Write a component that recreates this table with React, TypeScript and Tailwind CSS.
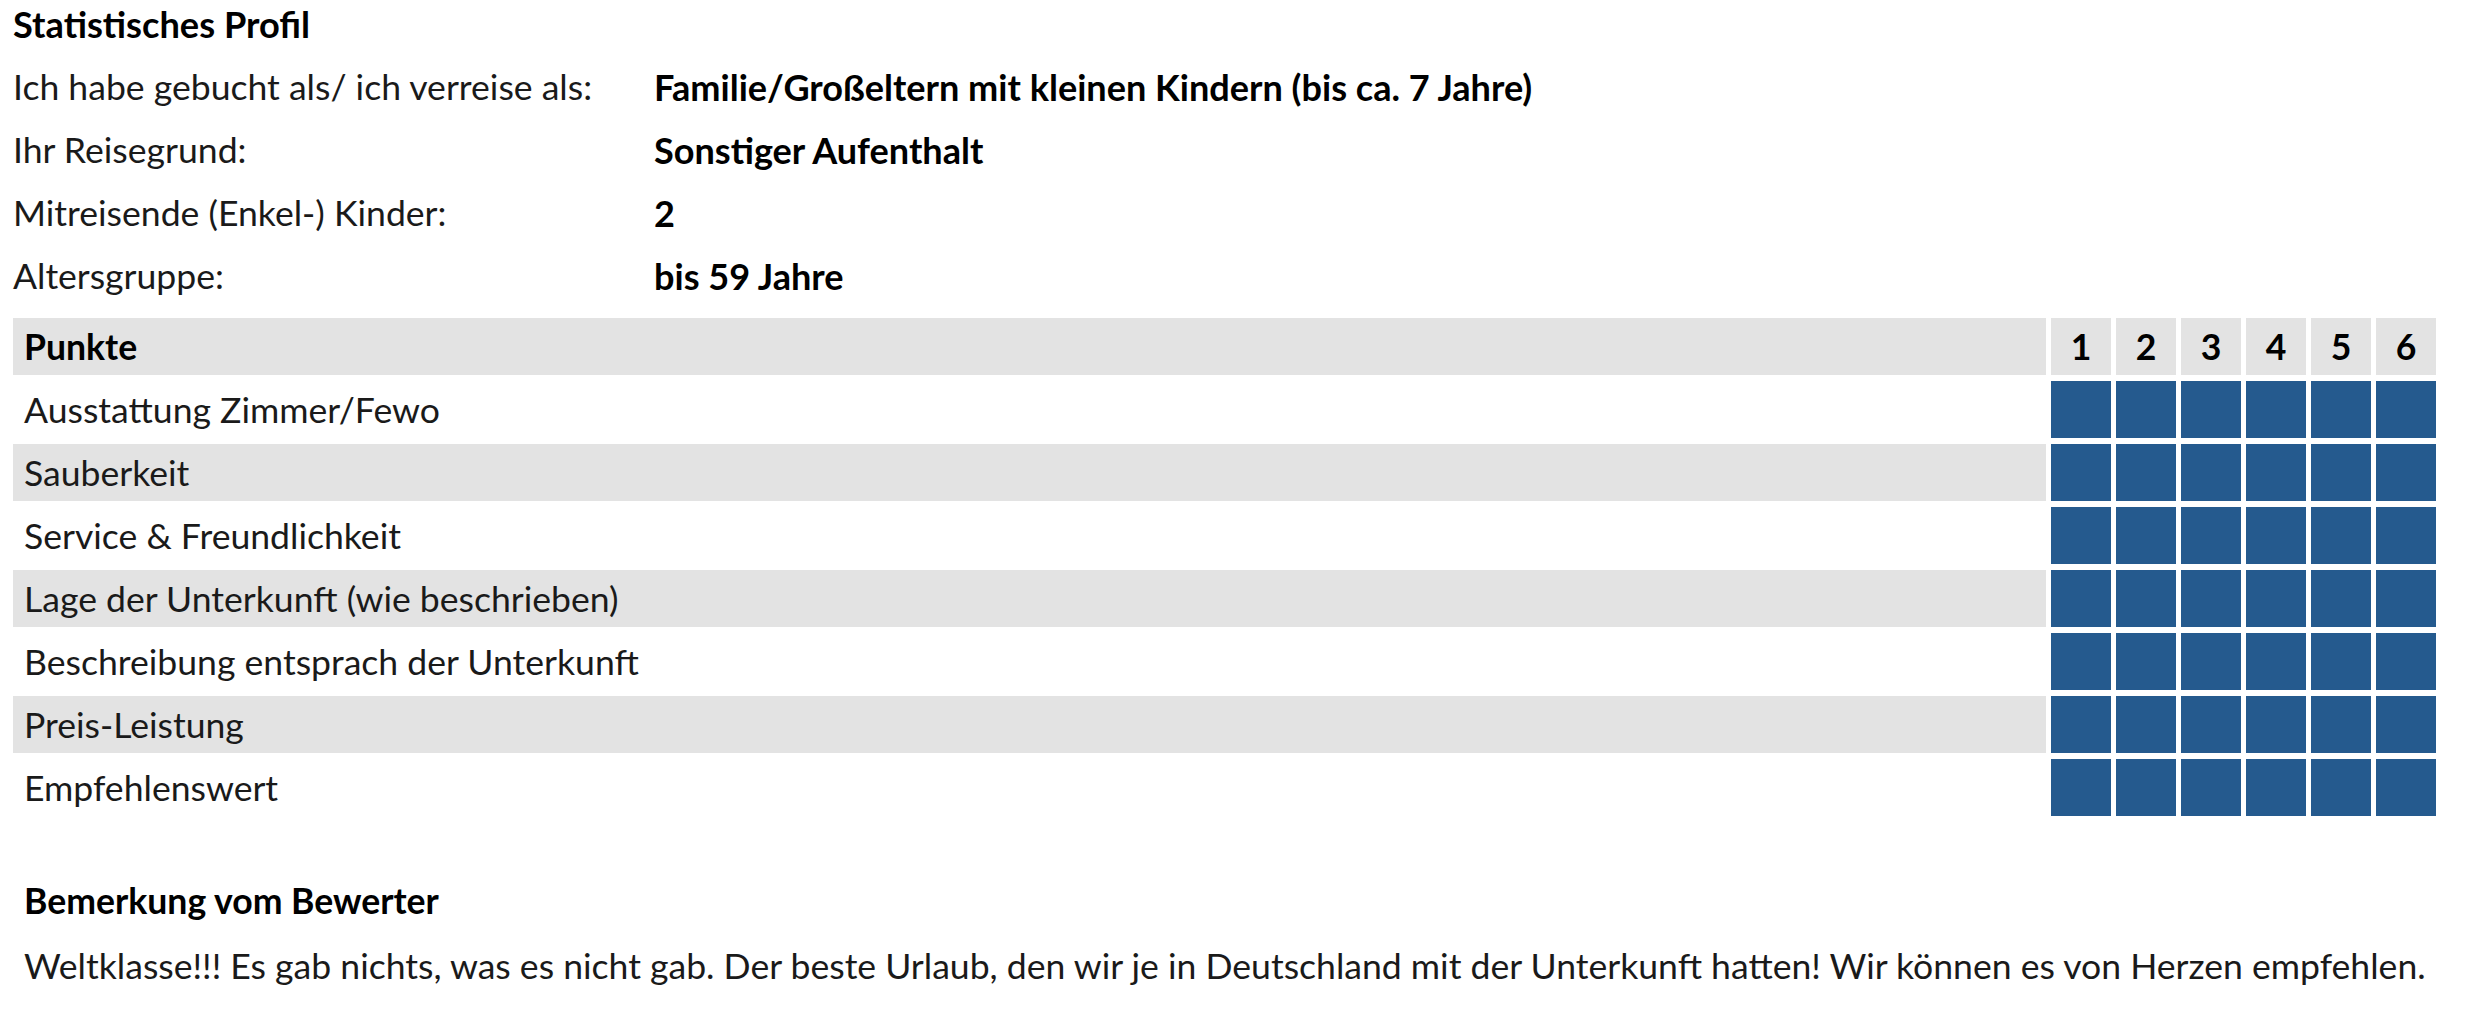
import React from "react";

const profile: [string, string][] = [
  ["Ich habe gebucht als/ ich verreise als:", "Familie/Großeltern mit kleinen Kindern (bis ca. 7 Jahre)"],
  ["Ihr Reisegrund:", "Sonstiger Aufenthalt"],
  ["Mitreisende (Enkel-) Kinder:", "2"],
  ["Altersgruppe:", "bis 59 Jahre"],
];

const criteria = [
  "Ausstattung Zimmer/Fewo",
  "Sauberkeit",
  "Service & Freundlichkeit",
  "Lage der Unterkunft (wie beschrieben)",
  "Beschreibung entsprach der Unterkunft",
  "Preis-Leistung",
  "Empfehlenswert",
];

export default function App() {
  return (
    <div className="w-[2484px] h-[1024px] bg-white text-[#1a1a1a] font-['Lato','Noto_Sans',sans-serif] text-[35.6px] leading-[44px]">
      <div className="pl-[13px]">
        <div className="h-[48px] flex items-center font-bold text-black text-[36.2px]">Statistisches Profil</div>
        <div className="mt-[7px]">
          {profile.map(([l, v]) => (
            <div key={l} className="h-[63px] flex items-center">
              <div className="w-[641px]">{l}</div>
              <div className="font-bold text-black text-[36.1px]">{v}</div>
            </div>
          ))}
        </div>
      </div>
      <div className="pl-[8px] mt-[5px]">
        <table className="w-[2433px] border-separate border-spacing-x-[5px] border-spacing-y-[6px]">
          <thead>
            <tr className="h-[57px]">
              <th className="bg-[#e3e3e3] text-left pl-[11px] font-bold text-black">Punkte</th>
              {[1, 2, 3, 4, 5, 6].map((n) => (
                <th key={n} className="w-[60px] bg-[#e3e3e3] text-center font-bold text-black">{n}</th>
              ))}
            </tr>
          </thead>
          <tbody>
            {criteria.map((c, i) => (
              <tr key={c} className="h-[57px]">
                <td className={`pl-[11px] ${i % 2 === 1 ? "bg-[#e3e3e3]" : "bg-white"}`}>{c}</td>
                {[1, 2, 3, 4, 5, 6].map((n) => (
                  <td key={n} className="w-[60px] bg-[#255a8e]"></td>
                ))}
              </tr>
            ))}
          </tbody>
        </table>
      </div>
      <div className="pl-[24px] mt-[57px]">
        <div className="h-[44px] flex items-center font-bold text-black">Bemerkung vom Bewerter</div>
        <div className="mt-[21px] h-[44px] flex items-center whitespace-nowrap">
          Weltklasse!!! Es gab nichts, was es nicht gab. Der beste Urlaub, den wir je in Deutschland mit der Unterkunft hatten! Wir können es von Herzen empfehlen.
        </div>
      </div>
    </div>
  );
}
